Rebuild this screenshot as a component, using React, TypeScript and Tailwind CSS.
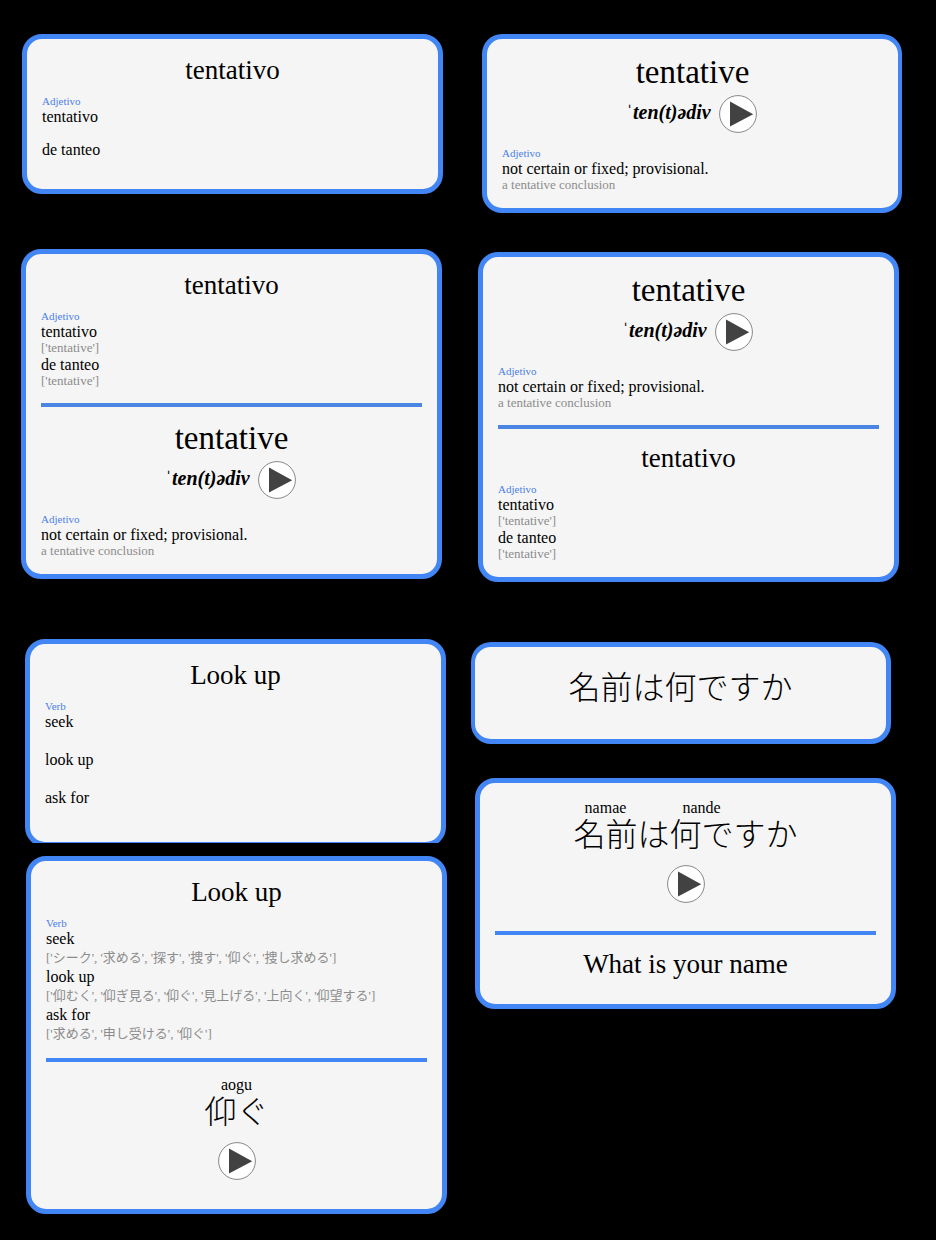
import type { ReactNode } from 'react';

type Entry = { word: string; note?: string };

function Card({ className = '', children }: { className?: string; children: ReactNode }) {
  return (
    <article
      className={`flex w-full max-w-[421px] flex-col rounded-[20px] border-5 border-[#4285f4] bg-[#f5f5f5] p-[15px] ${className}`}
    >
      {children}
    </article>
  );
}

function Title({ children }: { children: ReactNode }) {
  return <h2 className="mb-2 text-center text-[27px] leading-[33px]">{children}</h2>;
}

function PlayButton() {
  return (
    <button type="button" aria-label="Play" className="size-[38px] shrink-0 cursor-pointer">
      <svg viewBox="0 0 38 38" className="size-full" aria-hidden="true">
        <circle cx="19" cy="19" r="18.4" fill="#fff" stroke="#7a7a7a" strokeWidth="0.9" />
        <path d="M11 6.4 L34.2 19.2 L11 31.4 Z" fill="#424242" />
      </svg>
    </button>
  );
}

function Definitions({ kind, entries, tall = false }: { kind: string; entries: Entry[]; tall?: boolean }) {
  return (
    <section>
      <h3 className="text-[11px] leading-[13px] text-[#4a80ea]">{kind}</h3>
      <dl>
        {entries.map((entry) => (
          <div key={entry.word}>
            <dt className="text-[16px] leading-[18px]">{entry.word}</dt>
            <dd
              className={`text-[13px] text-[#8c8c8c] ${tall ? 'min-h-5 leading-5' : 'min-h-[15px] leading-[13px]'}`}
            >
              {entry.note}
            </dd>
          </div>
        ))}
      </dl>
    </section>
  );
}

function Rule({ muted = false }: { muted?: boolean }) {
  return <hr className={`mt-3.5 mb-[13px] h-1 border-0 ${muted ? 'bg-[#4a86e2]' : 'bg-[#4285f4]'}`} />;
}

function Tentativo({ notes = false }: { notes?: boolean }) {
  const note = notes ? "['tentative']" : undefined;
  return (
    <>
      <Title>tentativo</Title>
      <Definitions
        kind="Adjetivo"
        entries={[
          { word: 'tentativo', note },
          { word: 'de tanteo', note },
        ]}
      />
    </>
  );
}

function Tentative() {
  return (
    <>
      <h2 className="text-center text-[33px] leading-[37px]">tentative</h2>
      <div className="flex items-center justify-center gap-2 pt-1 pr-0.5 pb-3.5">
        <span className="pb-1 text-[20px] leading-[23px] font-bold">
          <span className="font-normal">ˈ</span>
          <i>ten(t)ədiv</i>
        </span>
        <PlayButton />
      </div>
      <Definitions
        kind="Adjetivo"
        entries={[{ word: 'not certain or fixed; provisional.', note: 'a tentative conclusion' }]}
      />
    </>
  );
}

function Reading({ parts }: { parts: { text: string; sound?: string }[] }) {
  return (
    <>
      <div className="flex items-end justify-center" lang="ja">
        {parts.map((part) => (
          <div key={part.text} className="flex flex-col items-center">
            {part.sound && <span className="text-[16px] leading-5">{part.sound}</span>}
            <span className="h-[43px] text-[32px] leading-[34px] font-light">{part.text}</span>
          </div>
        ))}
      </div>
      <div className="flex justify-center pt-1 pb-3.5">
        <PlayButton />
      </div>
    </>
  );
}

const seek: Entry[] = [
  { word: 'seek', note: "['シーク', '求める', '探す', '捜す', '仰ぐ', '捜し求める']" },
  { word: 'look up', note: "['仰むく', '仰ぎ見る', '仰ぐ', '見上げる', '上向く', '仰望する']" },
  { word: 'ask for', note: "['求める', '申し受ける', '仰ぐ']" },
];

export default function App() {
  return (
    <main className="grid min-h-screen grid-cols-2 gap-3 bg-black pt-[34px] pr-[26px] pb-6 pl-5 font-['Liberation_Serif','Noto_Sans_CJK_JP',serif] text-black">
      <div className="flex flex-col items-start">
        <div className="w-full pl-0.5">
          <Card>
            <Tentativo />
          </Card>
        </div>
        <div className="mt-[55px] w-full pl-px">
          <Card>
            <Tentativo notes />
            <Rule muted />
            <Tentative />
          </Card>
        </div>
        <div className="mt-[60px] max-h-[204px] w-full overflow-hidden pl-[5px]">
          <Card>
            <Title>Look up</Title>
            <Definitions kind="Verb" tall entries={seek.map(({ word }) => ({ word }))} />
          </Card>
        </div>
        <div className="mt-[13px] w-full pl-1.5">
          <Card>
            <Title>Look up</Title>
            <Definitions kind="Verb" tall entries={seek} />
            <Rule />
            <Reading parts={[{ text: '仰ぐ', sound: 'aogu' }]} />
          </Card>
        </div>
      </div>
      <div className="flex flex-col items-start">
        <div className="w-full max-w-[431px] pl-[11px]">
          <Card className="border-r-4">
            <Tentative />
          </Card>
        </div>
        <div className="mt-[39px] w-full pl-[7px]">
          <Card>
            <Tentative />
            <Rule muted />
            <Tentativo notes />
          </Card>
        </div>
        <div className="mt-[60px] w-full max-w-[420px]">
          <Card className="border-l-4">
            <p className="mb-2.5 h-[52px] pt-2 text-center text-[32px] leading-9 font-light" lang="ja">
              名前は何ですか
            </p>
          </Card>
        </div>
        <div className="mt-[34px] w-full pl-1">
          <Card>
            <Reading
              parts={[
                { text: '名前', sound: 'namae' },
                { text: 'は' },
                { text: '何で', sound: 'nande' },
                { text: 'すか' },
              ]}
            />
            <Rule />
            <Title>What is your name</Title>
          </Card>
        </div>
      </div>
    </main>
  );
}
